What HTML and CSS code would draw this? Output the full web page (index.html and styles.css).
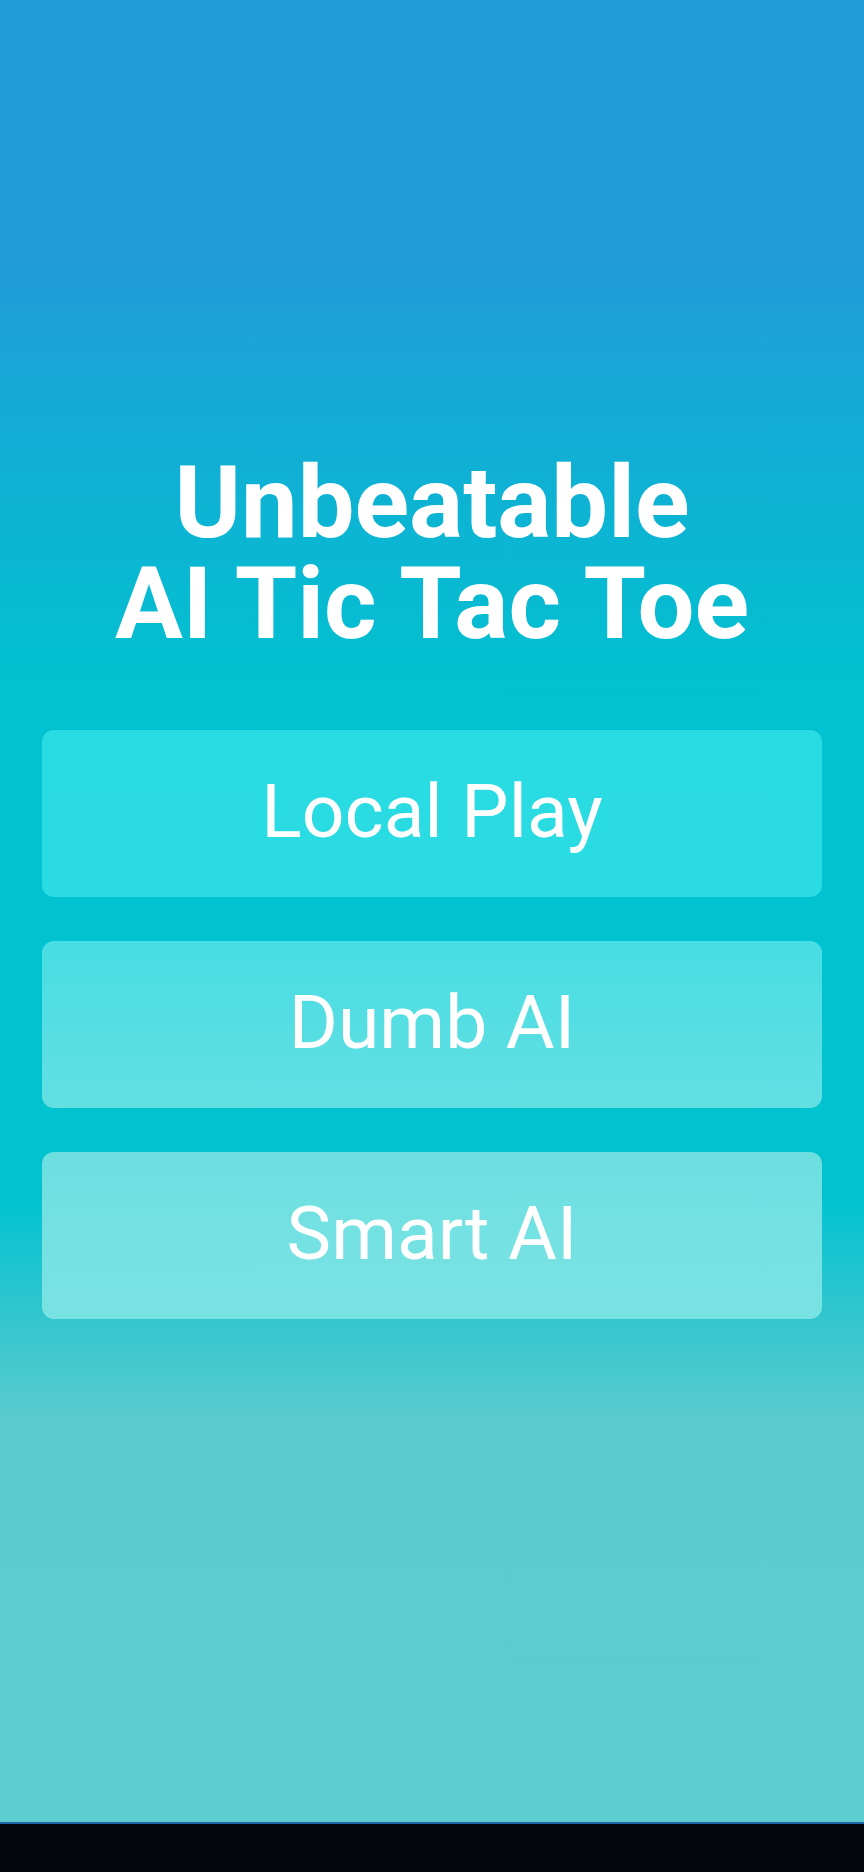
FILE: index.html
```html
<!DOCTYPE html>
<html lang="en">
<head>
<meta charset="utf-8">
<title>Unbeatable AI Tic Tac Toe</title>
<link rel="stylesheet" href="styles.css">
</head>
<body>
<div class="screen">
  <main class="menu">
    <h1 class="title"><span class="line">Unbeatable</span><span class="line">AI Tic Tac Toe</span></h1>
    <div class="buttons">
      <button class="btn btn-local">Local Play</button>
      <button class="btn btn-dumb">Dumb AI</button>
      <button class="btn btn-smart">Smart AI</button>
    </div>
  </main>
  <div class="navbar"></div>
</div>
</body>
</html>
```
FILE: styles.css
```css
html, body {
  margin: 0;
  padding: 0;
}
body {
  width: 864px;
  height: 1872px;
  overflow: hidden;
  font-family: Roboto, "Liberation Sans", sans-serif;
}
.screen {
  display: flex;
  flex-direction: column;
  height: 1872px;
}
.menu {
  flex: 1;
  display: flex;
  flex-direction: column;
  align-items: stretch;
  background: linear-gradient(to bottom,
    #229bd8 0px,
    #219cd8 260px,
    #0fb1d4 480px,
    #01c2d0 700px,
    #01c3d0 1200px,
    #30c6cf 1310px,
    #5acbce 1420px,
    #5ccccf 100%);
}
.title {
  margin: 452px 0 0;
  display: flex;
  flex-direction: column;
  font-size: 101px;
  font-weight: 700;
  color: #ffffff;
  text-align: center;
}
.line {
  display: block;
  height: 101px;
  line-height: 101px;
}
.buttons {
  display: flex;
  flex-direction: column;
  gap: 44px;
  padding: 0 42px;
  margin-top: 76px;
}
.btn {
  height: 167px;
  border: none;
  border-radius: 12px;
  padding: 0 0 5px;
  font-family: Roboto, "Liberation Sans", sans-serif;
  font-size: 75px;
  font-weight: 400;
  color: #ffffff;
  display: flex;
  align-items: center;
  justify-content: center;
}
.btn-local {
  background: linear-gradient(to bottom, #29dbe2, #2adce2);
}
.btn-dumb {
  background: linear-gradient(to bottom, #46dde3 0%, #55dee3 50%, #63dfe2 100%);
}
.btn-smart {
  background: linear-gradient(to bottom, #6ddfe1 0%, #74e1e2 50%, #79e2e2 100%);
}
.navbar {
  height: 48px;
  background: #05060b;
  border-top: 2px solid #1f64a8;
}
```
